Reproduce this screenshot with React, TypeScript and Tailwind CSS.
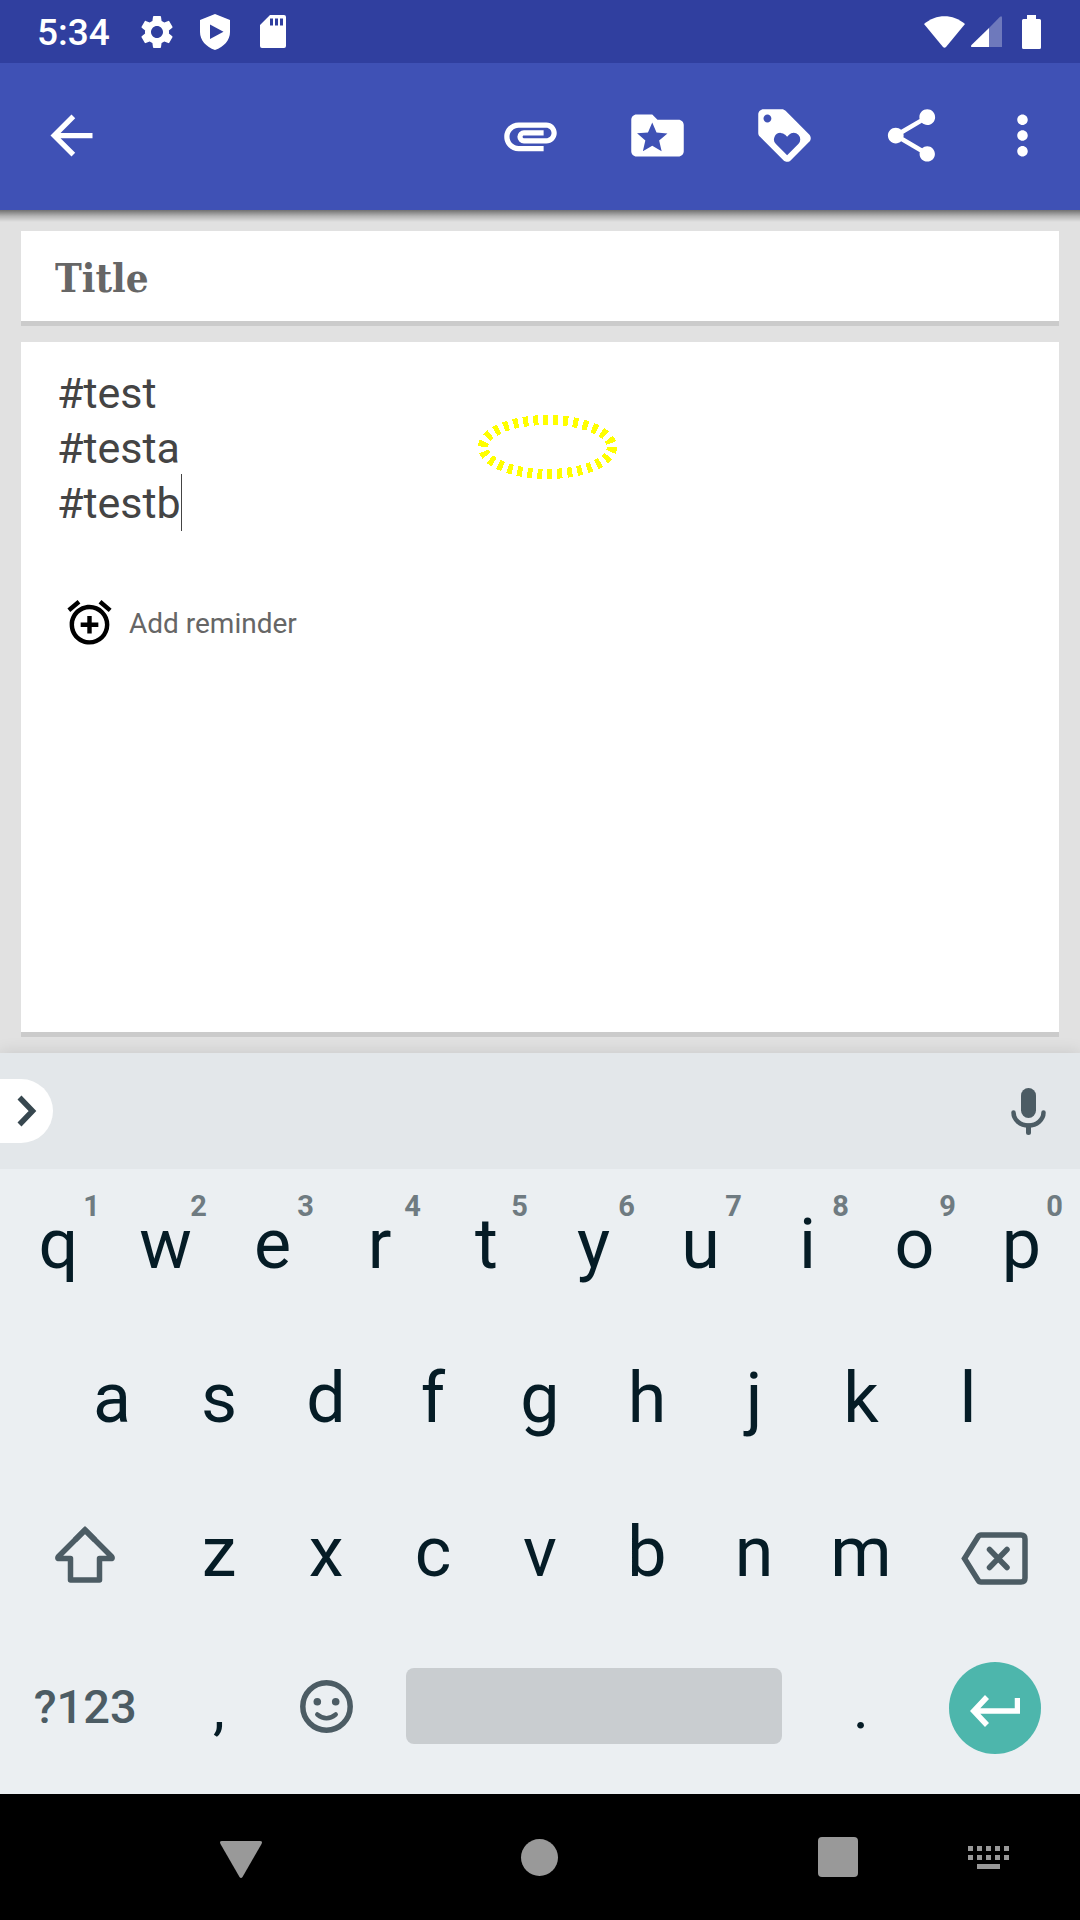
import React from "react";
import {
  MdAddAlarm,
  MdArrowBack,
  MdAttachment,
  MdLoyalty,
  MdMoreVert,
  MdSettings,
  MdShare,
} from "react-icons/md";

function StatusBar() {
  return (
    <header className="flex h-[63px] items-center justify-between bg-[#303f9f] pr-[39px] pl-[37px] text-white">
      <div className="flex items-center">
        <span className="w-[100px] pt-0.5 text-[37px] leading-none font-medium">5:34</span>
        <MdSettings className="size-10" aria-hidden />
        <svg className="ml-[23px] h-9 w-[30px]" viewBox="0 0 30 36" aria-hidden>
          <path
            fillRule="evenodd"
            fill="currentColor"
            d="M15 0 30 6v12c0 8-6 15-15 18C6 33 0 26 0 18V6zM10 10.500v14.500l13.500-7.200z"
          />
        </svg>
        <svg className="ml-[30px] h-[33px] w-[26px]" viewBox="0 0 26 33" aria-hidden>
          <path
            fillRule="evenodd"
            fill="currentColor"
            d="M10 0H24q2 0 2 2V31q0 2-2 2H2q-2 0-2-2V10zM10 3.500v7h3v-7zM15 3.500v7h3v-7zM20 3.500v7h3v-7z"
          />
        </svg>
      </div>
      <div className="flex items-center">
        <svg className="h-8 w-[41px]" viewBox="0 0 41 32" aria-hidden>
          <path fill="currentColor" d="M0 8C12-2.500 29-2.500 41 8L22 31q-1.500 1.500-3 0z" />
        </svg>
        <svg className="ml-1.5 h-[31px] w-[31px]" viewBox="0 0 31 31" aria-hidden>
          <path fill="currentColor" fillOpacity="0.3" d="M18 12 29 .7q2-1.500 2 1V31H18z" />
          <path fill="currentColor" d="M18 12V31H1.500Q-1 31 .5 29z" />
        </svg>
        <svg className="ml-5 h-[34px] w-[19px]" viewBox="0 0 19 34" aria-hidden>
          <path
            fill="currentColor"
            d="M5 0h9v4h3.500q1.500 0 1.500 1.500v27q0 1.500-1.500 1.500h-16Q0 34 0 32.500v-27Q0 4 1.500 4H5z"
          />
        </svg>
      </div>
    </header>
  );
}

function FolderStarIcon() {
  return (
    <svg className="size-[63px]" viewBox="0 0 24 24" fill="currentColor" aria-hidden>
      <path d="M20 6h-8l-2-2H4c-1.100 0-1.990.9-1.990 2L2 18c0 1.100.9 2 2 2h16c1.100 0 2-.9 2-2V8c0-1.100-.9-2-2-2zm-6.420 12L10 15.900 6.420 18l.95-4.070-3.160-2.740 4.160-.36L10 7l1.630 3.840 4.160.36-3.160 2.740.95 4.060z" />
    </svg>
  );
}

const actionButton = "flex h-full w-[127px] items-center justify-center";

function Toolbar() {
  return (
    <div className="relative z-10 flex h-[147px] items-center justify-between bg-[#3f51b5] pr-2.5 pb-0.5 text-white">
      <button aria-label="Back" className="flex h-full w-[142px] items-center justify-center">
        <MdArrowBack className="size-[63px]" />
      </button>
      <div className="flex h-full">
        <button aria-label="Attach" className={actionButton}>
          <MdAttachment className="size-[63px]" />
        </button>
        <button aria-label="Category" className={actionButton}>
          <FolderStarIcon />
        </button>
        <button aria-label="Tags" className={actionButton}>
          <MdLoyalty className="size-[63px]" />
        </button>
        <button aria-label="Share" className={actionButton}>
          <MdShare className="size-[63px]" />
        </button>
        <button aria-label="More options" className="flex h-full w-[95px] items-center justify-center">
          <MdMoreVert className="size-[63px]" />
        </button>
      </div>
      <div className="absolute inset-x-0 top-full h-3 bg-linear-to-b from-black/50 via-black/20 to-transparent" />
    </div>
  );
}

function Editor() {
  return (
    <main className="flex flex-1 flex-col gap-4 bg-[#e1e1e1] px-[21px] pt-[21px] pb-4">
      <div className="border-b-[5px] border-[#cbcbcb] bg-white">
        <input
          aria-label="Title"
          placeholder="Title"
          className="block h-[90px] w-full px-[34px] pt-0.5 font-['DejaVu_Serif_Condensed','DejaVu_Serif',serif] text-[40px] font-bold outline-none placeholder:text-[#666]"
        />
      </div>
      <div className="relative flex-1 border-b-[5px] border-[#cbcbcb] bg-white pt-6">
        <textarea
          aria-label="Note"
          rows={3}
          defaultValue={"#test\n#testa\n#testb"}
          className="block w-full resize-none overflow-hidden px-9 text-[43px] leading-[55px] text-[#444] outline-none"
        />
        <div className="absolute top-[132px] left-40 h-[57px] w-px bg-[#444]" />
        <button className="mt-[65px] ml-[42px] flex items-center gap-[13px] text-[28px] text-[#666]">
          <MdAddAlarm className="size-[53px] text-black" aria-hidden />
          <span className="pt-0.5">Add reminder</span>
        </button>
        <svg
          className="absolute top-[73px] left-[457px] h-16 w-[139px]"
          viewBox="0 0 139 64"
          shapeRendering="crispEdges"
          aria-hidden
        >
          <ellipse
            cx="69.500"
            cy="32"
            rx="64.500"
            ry="27"
            fill="none"
            stroke="#ffff00"
            strokeWidth="10"
            strokeDasharray="5 5"
          />
        </svg>
      </div>
    </main>
  );
}

function SuggestionStrip() {
  return (
    <div className="flex h-[116px] items-center justify-between bg-[#e3e7ea] pr-[34px]">
      <button
        aria-label="Expand suggestions"
        className="flex h-16 w-[53px] items-center justify-center rounded-r-full bg-white"
      >
        <svg className="h-8 w-5" viewBox="0 0 20 32" fill="none" stroke="#37474f" strokeWidth="5.500" aria-hidden>
          <path d="M2.500 2.500 15.500 16 2.500 29.500" />
        </svg>
      </button>
      <button aria-label="Voice input">
        <svg className="h-[47px] w-[35px]" viewBox="0 0 35 47" fill="none" stroke="#4c5c64" strokeLinecap="round" aria-hidden>
          <rect x="10" y="0" width="15" height="30" rx="7.500" fill="#4c5c64" stroke="none" />
          <path d="M2.500 24.500A15 13 0 0 0 32.500 24.500" strokeWidth="4.500" />
          <path d="M17.500 38v6.500" strokeWidth="5" />
        </svg>
      </button>
    </div>
  );
}

const row = "flex h-[154px]";
const key = "relative flex min-w-0 flex-2 items-center justify-center pb-1";
const wideKey = "flex min-w-0 flex-3 items-center justify-center";
const pointKey = "flex min-w-0 flex-2 items-center justify-center text-[60px]";

function Letter({ label, hint }: { label: string; hint?: string }) {
  return (
    <button className={key}>
      {label}
      {hint && (
        <span className="absolute top-5 right-3 text-[29px] leading-[34px] font-bold text-[#6f7b81]">{hint}</span>
      )}
    </button>
  );
}

function Keyboard() {
  return (
    <section aria-label="Keyboard" className="relative bg-[#ebeff2] shadow-[0_0_16px_rgba(0,0,0,0.12)]">
      <SuggestionStrip />
      <div className="px-[5px] pb-[9px] text-[70px] leading-none text-[#051c26]">
        <div className={row}>
          {"qwertyuiop".split("").map((c, i) => (
            <Letter key={c} label={c} hint={String((i + 1) % 10)} />
          ))}
        </div>
        <div className={row}>
          <div className="flex-1" />
          {"asdfghjkl".split("").map((c) => (
            <Letter key={c} label={c} />
          ))}
          <div className="flex-1" />
        </div>
        <div className={row}>
          <button aria-label="Shift" className={wideKey}>
            <svg className="h-[57px] w-[60px]" viewBox="0 0 60 57" fill="none" stroke="#4c5c64" strokeWidth="5.500" aria-hidden>
              <path strokeLinejoin="round" d="M30 4 3.500 30.500Q2 32.500 4 32.500H15.500V54H44.500V32.500H56Q58 32.500 56.500 30.500Z" />
              <path d="M20 14 30 4 40 14" />
            </svg>
          </button>
          {"zxcvbnm".split("").map((c) => (
            <Letter key={c} label={c} />
          ))}
          <button aria-label="Backspace" className="flex min-w-0 flex-3 items-center justify-center pt-2">
            <svg className="h-[53px] w-[67px]" viewBox="0 0 67 53" fill="none" stroke="#4c5c64" strokeWidth="5.500" aria-hidden>
              <path d="M20 3H60Q64 3 64 7V46Q64 50 60 50H20Q18 50 17 48L3.500 26.500 17 5Q18 3 20 3Z" />
              <path strokeLinecap="round" d="M28.500 17.500 46 35.500M46 17.500 28.500 35.500" />
            </svg>
          </button>
        </div>
        <div className={row}>
          <button className="flex min-w-0 flex-3 items-center justify-center pb-1 text-[47px] font-medium text-[#4c5c64]">
            ?123
          </button>
          <button className={pointKey}>,</button>
          <button aria-label="Emoji" className={key}>
            <svg className="size-[53px]" viewBox="0 0 53 53" fill="none" stroke="#4c5c64" strokeWidth="5.500" aria-hidden>
              <circle cx="26.500" cy="26.500" r="23.700" />
              <circle cx="17.300" cy="21.700" r="3.800" fill="#4c5c64" stroke="none" />
              <circle cx="35.700" cy="21.700" r="3.800" fill="#4c5c64" stroke="none" />
              <path strokeWidth="4.500" strokeLinecap="round" d="M17.300 34.500Q26.500 42 35.700 34.500" />
            </svg>
          </button>
          <div className="flex min-w-0 flex-8 items-center pb-1">
            <button aria-label="Space" className="mx-[26px] h-[76px] flex-1 rounded-lg bg-[#c9cdd0]" />
          </div>
          <button className={pointKey}>.</button>
          <div className="flex min-w-0 flex-3 items-center justify-center">
            <button aria-label="Enter" className="flex size-[92px] items-center justify-center rounded-full bg-[#4db6ac] pt-1.5">
              <svg className="h-8 w-[50px]" viewBox="0 0 50 32" fill="none" stroke="#fff" strokeWidth="5.500" aria-hidden>
                <path d="M17 2 3.800 16 17 30M4 16H47.500V3" />
              </svg>
            </button>
          </div>
        </div>
      </div>
    </section>
  );
}

const navButton = "flex h-full w-[200px] items-center justify-center";

function NavigationBar() {
  return (
    <nav className="flex h-[126px] bg-black pr-[41px] pl-[141px]">
      <div className="flex flex-1 justify-between">
        <button aria-label="Hide keyboard" className={navButton}>
          <svg className="h-[42px] w-[42px]" viewBox="0 0 42 42" fill="#999" aria-hidden>
            <path d="M2 5H40q3 0 1.500 3L22.500 41q-1.500 2-3 0L.5 8Q-1 5 2 5z" />
          </svg>
        </button>
        <button aria-label="Home" className={navButton}>
          <span className="size-[37px] rounded-full bg-[#999]" />
        </button>
        <button aria-label="Recent apps" className={navButton}>
          <span className="size-10 rounded-[4px] bg-[#999]" />
        </button>
      </div>
      <button aria-label="Switch keyboard" className="flex h-full w-[101px] items-center justify-center">
        <svg className="h-[23px] w-[41px]" viewBox="0 0 41 23" fill="#999" aria-hidden>
          {[0, 9, 18, 27, 36].map((x) => (
            <React.Fragment key={x}>
              <rect x={x} y="0" width="5" height="5" />
              <rect x={x} y="9" width="5" height="5" />
            </React.Fragment>
          ))}
          <rect x="9" y="18" width="23" height="5" />
        </svg>
      </button>
    </nav>
  );
}

export default function App() {
  return (
    <div className="flex min-h-screen flex-col font-[Roboto,sans-serif]">
      <StatusBar />
      <Toolbar />
      <Editor />
      <Keyboard />
      <NavigationBar />
    </div>
  );
}
